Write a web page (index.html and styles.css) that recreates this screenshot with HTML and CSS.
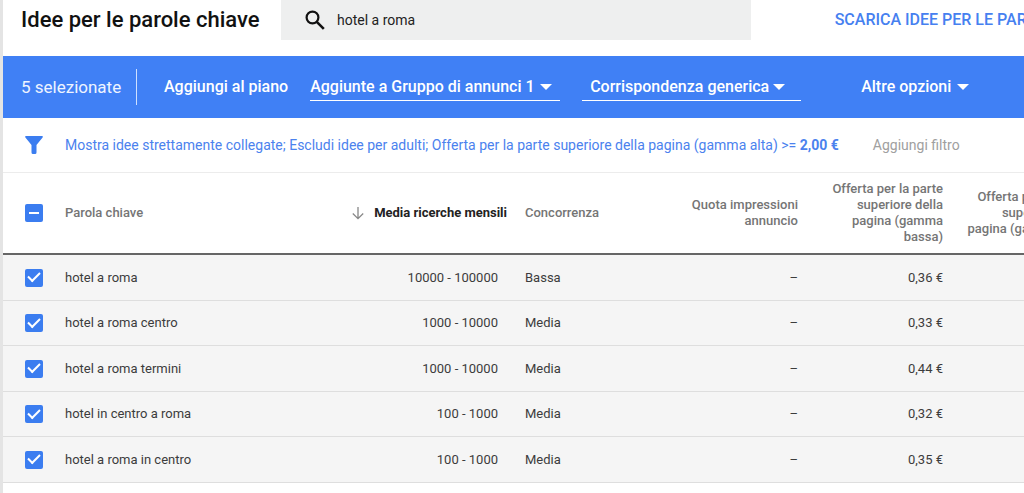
FILE: index.html
```html
<!DOCTYPE html>
<html lang="it">
<head>
<meta charset="utf-8">
<title>Idee per le parole chiave</title>
<link rel="stylesheet" href="styles.css">
</head>
<body>
<main class="panel">
  <header class="header">
    <h1 class="title">Idee per le parole chiave</h1>
    <label class="search">
      <svg class="search-icon" viewBox="0 0 20 20" aria-hidden="true"><circle cx="7.5" cy="7.5" r="5.9" fill="none" stroke="currentColor" stroke-width="2.2"/><path d="M11.800 11.800l7 7" stroke="currentColor" stroke-width="2.600"/></svg>
      <input class="search-input" type="text" value="hotel a roma" aria-label="Cerca parole chiave">
    </label>
    <a class="download" href="#">SCARICA IDEE PER LE PAROLE CHIAVE</a>
  </header>

  <section class="toolbar" aria-label="Azioni">
    <span class="count">5 selezionate</span>
    <button class="action" type="button">Aggiungi al piano</button>
    <span class="picker picker-group">
      <select class="picker-select" aria-label="Gruppo di annunci"><option>Aggiunte a Gruppo di annunci 1</option></select>
      <svg class="caret" viewBox="0 0 12 6" aria-hidden="true"><path d="M0 0h12L6 6z" fill="currentColor"/></svg>
    </span>
    <span class="picker picker-match">
      <select class="picker-select" aria-label="Corrispondenza"><option>Corrispondenza generica</option></select>
      <svg class="caret" viewBox="0 0 12 6" aria-hidden="true"><path d="M0 0h12L6 6z" fill="currentColor"/></svg>
    </span>
    <button class="action more" type="button">Altre opzioni <svg class="caret-inline" viewBox="0 0 12 6" aria-hidden="true"><path d="M0 0h12L6 6z" fill="currentColor"/></svg></button>
  </section>

  <section class="filters" aria-label="Filtri">
    <svg class="funnel" viewBox="0 0 18 18" aria-hidden="true"><path d="M1 0h16q1.400 .3.600 1.500L11.500 9v7.500q0 1.500-1.500 1.500H8q-1.500 0-1.500-1.500V9L.4 1.500Q-.4.300 1 0z" fill="currentColor"/></svg>
    <a class="filter-link" href="#">Mostra idee strettamente collegate; Escludi idee per adulti; Offerta per la parte superiore della pagina (gamma alta) &gt;= <b class="amount">2,00 €</b></a>
    <button class="add-filter" type="button">Aggiungi filtro</button>
  </section>

  <div class="table-wrap">
    <table class="ideas">
      <colgroup><col class="c-check"><col class="c-keyword"><col class="c-volume"><col class="c-comp"><col class="c-share"><col class="c-bid"><col class="c-bid"></colgroup>
      <thead>
        <tr>
          <th class="check-cell"><input class="box box-mixed" type="checkbox" aria-label="Seleziona tutto"></th>
          <th>Parola chiave</th>
          <th class="num sorted"><svg class="sort" viewBox="0 0 12 14" aria-hidden="true"><path d="M6 1v11.500M.8 7.500L6 12.600l5.200-5.100" fill="none" stroke="currentColor" stroke-width="1.300"/></svg>Media ricerche mensili</th>
          <th>Concorrenza</th>
          <th class="num">Quota impressioni annuncio</th>
          <th class="num">Offerta per la parte superiore della pagina (gamma bassa)</th>
          <th class="num">Offerta per la parte superiore della pagina (gamma alta)</th>
        </tr>
      </thead>
      <tbody>
        <tr><td class="check-cell"><input class="box" type="checkbox" id="k1" checked></td><td><label for="k1">hotel a roma</label></td><td class="num volume">10000 - 100000</td><td>Bassa</td><td class="num">–</td><td class="num">0,36 €</td><td></td></tr>
        <tr><td class="check-cell"><input class="box" type="checkbox" id="k2" checked></td><td><label for="k2">hotel a roma centro</label></td><td class="num volume">1000 - 10000</td><td>Media</td><td class="num">–</td><td class="num">0,33 €</td><td></td></tr>
        <tr><td class="check-cell"><input class="box" type="checkbox" id="k3" checked></td><td><label for="k3">hotel a roma termini</label></td><td class="num volume">1000 - 10000</td><td>Media</td><td class="num">–</td><td class="num">0,44 €</td><td></td></tr>
        <tr><td class="check-cell"><input class="box" type="checkbox" id="k4" checked></td><td><label for="k4">hotel in centro a roma</label></td><td class="num volume">100 - 1000</td><td>Media</td><td class="num">–</td><td class="num">0,32 €</td><td></td></tr>
        <tr><td class="check-cell"><input class="box" type="checkbox" id="k5" checked></td><td><label for="k5">hotel a roma in centro</label></td><td class="num volume">100 - 1000</td><td>Media</td><td class="num">–</td><td class="num">0,35 €</td><td></td></tr>
      </tbody>
    </table>
  </div>
</main>
</body>
</html>
```
FILE: styles.css
```css
* { box-sizing: border-box; }

body {
  margin: 0;
  background: #fff;
  color: #3c3c3c;
  font: 13px/16px Roboto, "Liberation Sans", sans-serif;
  overflow: hidden;
}

button, input, select { font: inherit; color: inherit; }

button {
  padding: 0;
  border: 0;
  background: none;
  white-space: nowrap;
}

a { text-decoration: none; }

.panel {
  min-height: 100vh;
  border-left: 3px solid #e4e4e4;
}

.header {
  display: flex;
  align-items: flex-start;
  height: 56px;
  overflow: hidden;
  white-space: nowrap;
}

.title {
  flex: none;
  width: 278px;
  margin: 0;
  padding-left: 18px;
  color: #111;
  font-size: 22px;
  font-weight: 500;
  line-height: 40px;
}

.search {
  display: flex;
  flex: 0 0 46%;
  align-items: center;
  gap: 12px;
  height: 40px;
  padding-left: 24px;
  background: #eeefef;
}

.search-icon { width: 20px; height: 20px; color: #111; }

.search-input {
  flex: 1;
  min-width: 0;
  padding: 0;
  border: 0;
  outline: 0;
  background: none;
  color: #222;
  font-size: 14px;
}

.download {
  margin-left: 84px;
  color: #4680f0;
  font-size: 16px;
  font-weight: 500;
  line-height: 40px;
}

.toolbar {
  display: flex;
  align-items: center;
  height: 62px;
  padding-left: 18px;
  background: #4080f5;
  color: #fff;
  font-size: 16px;
  font-weight: 500;
}

.count {
  width: 116px;
  margin-right: 27px;
  border-right: 1px solid #cfe0ff;
  color: #eef4ff;
  font-size: 17px;
  font-weight: 400;
  line-height: 36px;
}

.picker {
  position: relative;
  height: 28px;
  border-bottom: 1px solid #fff;
}

.picker-group { width: 250px; margin-left: 22px; }
.picker-match { width: 219px; margin-left: 22px; }

.picker-select {
  width: 100%;
  height: 28px;
  padding: 0;
  border: 0;
  outline: 0;
  background: none;
  appearance: none;
}

.picker-match .picker-select { padding-left: 8px; }

.caret, .caret-inline { width: 12px; height: 6px; }

.caret {
  position: absolute;
  top: 11px;
  right: 8px;
  pointer-events: none;
}

.picker-match .caret { right: 16px; }

.more {
  display: flex;
  align-items: center;
  gap: 6px;
  margin-left: 60px;
}

.filters {
  display: flex;
  align-items: center;
  height: 55px;
  padding-left: 22px;
  border-bottom: 1px solid #ececec;
  font-size: 14px;
  white-space: nowrap;
}

.funnel { flex: none; width: 18px; height: 18px; margin-right: 22px; color: #3b7df0; }
.filter-link { color: #4b82ee; }
.amount { font-weight: 700; }
.add-filter { margin-left: 34px; color: #a0a0a0; }

.table-wrap { overflow: hidden; }

.ideas {
  width: 100%;
  min-width: 1085px;
  table-layout: fixed;
  border-collapse: separate;
  border-spacing: 0;
}

.c-check { width: 62px; }
.c-volume { width: 184px; }
.c-comp { width: 140px; }
.c-share { width: 151px; }
.c-bid { width: 145px; }

th {
  height: 82px;
  padding: 0 0 0 20px;
  border-bottom: 2px solid #666;
  color: #757575;
  font-weight: 500;
  text-align: left;
}

td {
  height: 46px;
  padding: 0 0 0 20px;
  border-bottom: 1px solid #dedede;
  background: #f5f5f5;
}

tr:nth-child(even) td { height: 45px; }

th:nth-child(2), td:nth-child(2) { padding-left: 0; }
th:nth-child(4), td:nth-child(4) { padding-left: 18px; }

.num { text-align: right; }
.volume { padding-right: 9px; }
.sorted { padding-left: 0; color: #222; font-weight: 700; white-space: nowrap; }

.sort {
  width: 12px;
  height: 14px;
  margin-right: 10px;
  color: #888;
  vertical-align: -3px;
}

th.check-cell, td.check-cell { padding-left: 22px; }

.box {
  display: grid;
  place-items: center;
  width: 18px;
  height: 18px;
  margin: 0;
  border-radius: 2px;
  background: #3b7df0;
  appearance: none;
}

.box:checked::before {
  content: "";
  width: 10px;
  height: 5px;
  margin-bottom: 4px;
  border: solid #fff;
  border-width: 0 0 2px 2px;
  transform: rotate(-45deg);
}

.box-mixed::before {
  content: "";
  width: 10px;
  height: 2px;
  background: #fff;
}
```
